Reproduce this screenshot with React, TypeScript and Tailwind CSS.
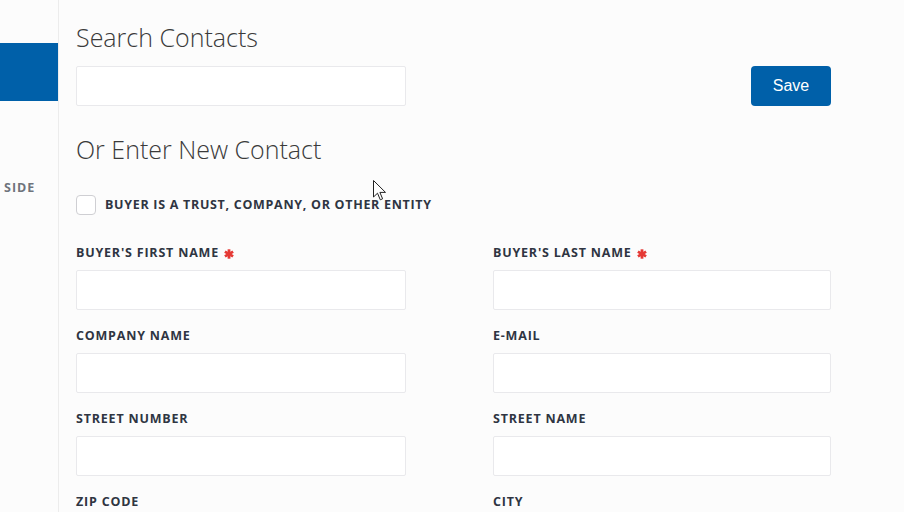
import React from "react";

function Asterisk() {
  return (
    <svg width="10" height="10" viewBox="0 0 10 10" className="ml-[5px] inline-block">
      <g stroke="#e53935" strokeWidth="2.8" strokeLinecap="butt">
        <line x1="5" y1="0.3" x2="5" y2="9.7" />
        <line x1="0.9" y1="2.65" x2="9.1" y2="7.35" />
        <line x1="0.9" y1="7.35" x2="9.1" y2="2.65" />
      </g>
    </svg>
  );
}

function Field({ label, required }: { label: string; required?: boolean }) {
  return (
    <div className="flex flex-col">
      <label className="flex h-[17px] items-center text-[12.5px] font-bold tracking-[0.8px] text-[#2f3542]">
        {label}
        {required && <Asterisk />}
      </label>
      <input className="mt-2 h-10 w-full rounded-[2px] border border-[#e9e9ec] bg-white px-3 outline-none" />
    </div>
  );
}

export default function App() {
  return (
    <div className="relative flex h-[512px] w-[904px] overflow-hidden bg-[#fcfcfc] [font-family:'Open_Sans',sans-serif]">
      {/* Sidebar */}
      <aside className="flex w-[59px] shrink-0 flex-col border-r border-[#ececec]">
        <div className="mt-[43px] h-[58px] w-[58px] bg-[#0060a9]" />
        <span className="mt-[78px] pl-1 text-[12.5px] font-bold tracking-[1px] text-[#6f747c]">SIDE</span>
      </aside>

      {/* Main */}
      <main className="flex flex-1 flex-col pl-[17px] pt-[20px]">
        <h2 className="text-[25px] font-light leading-[34px] text-[#3a3a3a]">Search Contacts</h2>
        <div className="mt-[12px] flex w-[755px] items-center justify-between">
          <input className="h-10 w-[330px] rounded-[2px] border border-[#e9e9ec] bg-white px-3 outline-none" />
          <button className="h-10 w-[80px] rounded-[4px] bg-[#0060a9] text-[16px] text-white [font-family:'Liberation_Sans',sans-serif]">
            Save
          </button>
        </div>

        <h2 className="mt-[26px] text-[25px] font-light leading-[34px] text-[#3a3a3a]">Or Enter New Contact</h2>

        <label className="mt-[29px] flex items-center">
          <span className="h-[20px] w-[20px] rounded-[4px] border border-[#cfcfd3] bg-white" />
          <span className="ml-[9px] text-[12.5px] font-bold tracking-[0.7px] text-[#2f3542]">
            BUYER IS A TRUST, COMPANY, OR OTHER ENTITY
          </span>
        </label>

        <div className="mt-[30px] grid grid-cols-[330px_338px] gap-x-[87px] gap-y-[18px]">
          <Field label="BUYER'S FIRST NAME" required />
          <Field label="BUYER'S LAST NAME" required />
          <Field label="COMPANY NAME" />
          <Field label="E-MAIL" />
          <Field label="STREET NUMBER" />
          <Field label="STREET NAME" />
          <Field label="ZIP CODE" />
          <Field label="CITY" />
        </div>
      </main>

      {/* Mouse cursor */}
      <svg width="14" height="22" viewBox="0 0 14 22" className="absolute left-[373px] top-[180px]">
        <path d="M0.5 0.5 L0.5 17 L4.5 13.2 L7.3 19.8 L9.6 18.8 L6.9 12.4 L12.5 12.4 Z" fill="#fff" stroke="#222" strokeWidth="1" strokeLinejoin="round" />
      </svg>
    </div>
  );
}
